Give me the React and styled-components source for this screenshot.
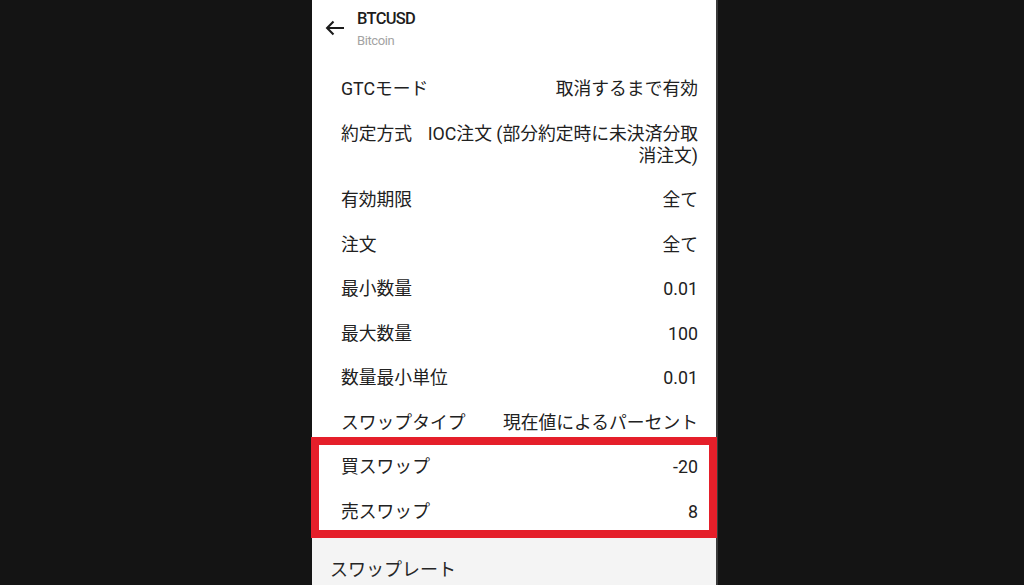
import React from 'react';
import styled, { createGlobalStyle } from 'styled-components';

const specs = [
  { label: 'GTCモード', value: '取消するまで有効' },
  { label: '約定方式', value: 'IOC注文 (部分約定時に未決済分取消注文)' },
  { label: '有効期限', value: '全て' },
  { label: '注文', value: '全て' },
  { label: '最小数量', value: '0.01' },
  { label: '最大数量', value: '100' },
  { label: '数量最小単位', value: '0.01' },
  { label: 'スワップタイプ', value: '現在値によるパーセント' },
];

const swaps = [
  { label: '買スワップ', value: '-20' },
  { label: '売スワップ', value: '8' },
];

function BackArrow() {
  return (
    <svg width="20" height="16" viewBox="0 0 20 16" fill="none">
      <path d="M19 8H2.5M8.5 1.6L2.1 8l6.4 6.4" stroke="#1b1b1b" strokeWidth="2.1" />
    </svg>
  );
}

function App() {
  return (
    <>
      <GlobalStyle />
      <Screen>
        <Phone>
          <Header>
            <BackButton>
              <BackArrow />
            </BackButton>
            <TitleBlock>
              <Symbol>BTCUSD</Symbol>
              <SymbolName>Bitcoin</SymbolName>
            </TitleBlock>
          </Header>

          <SpecList>
            {specs.map((item) => (
              <Row key={item.label}>
                <Label>{item.label}</Label>
                <Value>{item.value}</Value>
              </Row>
            ))}
            <Highlight>
              {swaps.map((item) => (
                <Row key={item.label}>
                  <Label>{item.label}</Label>
                  <Value>{item.value}</Value>
                </Row>
              ))}
            </Highlight>
          </SpecList>

          <Section>
            <SectionTitle>スワップレート</SectionTitle>
          </Section>
        </Phone>
      </Screen>
    </>
  );
}

const GlobalStyle = createGlobalStyle`
  html, body {
    margin: 0;
    padding: 0;
    background: #141414;
  }
  body {
    font-family: "Roboto", "Noto Sans CJK JP", sans-serif;
    color: #212121;
  }
`;

const Screen = styled.div`
  width: 1024px;
  height: 585px;
  overflow: hidden;
  background: #141414;
  display: flex;
`;

const Phone = styled.div`
  margin-left: 312px;
  width: 404px;
  height: 585px;
  background: #ffffff;
  box-shadow: 2px 0 0 #3a3a3a;
  display: flex;
  flex-direction: column;
`;

const Header = styled.div`
  height: 67px;
  display: flex;
  align-items: flex-start;
  box-sizing: border-box;
  padding: 9px 0 0 13px;
  column-gap: 12px;
`;

const BackButton = styled.div`
  width: 20px;
  height: 16px;
  margin-top: 11px;
  display: flex;
`;

const TitleBlock = styled.div`
  display: flex;
  flex-direction: column;
`;

const Symbol = styled.div`
  font-family: "Roboto", sans-serif;
  font-weight: 500;
  font-size: 16.5px;
  letter-spacing: -0.7px;
  line-height: 20px;
  color: #1d1d1d;
`;

const SymbolName = styled.div`
  font-family: "Roboto", sans-serif;
  font-weight: 400;
  font-size: 13px;
  letter-spacing: -0.4px;
  line-height: 16px;
  margin-top: 4px;
  color: #a3a3a3;
`;

const SpecList = styled.div`
  display: flex;
  flex-direction: column;
`;

const Row = styled.div`
  display: flex;
  justify-content: space-between;
  align-items: flex-start;
  column-gap: 12px;
  padding: 11.25px 18px 11.25px 29px;
  font-size: 17.8px;
  line-height: 22px;
`;

const Label = styled.div`
  flex-shrink: 0;
  white-space: nowrap;
`;

const Value = styled.div`
  text-align: right;
`;

const Highlight = styled.div`
  position: relative;
  display: flex;
  flex-direction: column;

  &::after {
    content: '';
    position: absolute;
    top: -8px;
    bottom: -4px;
    left: -1px;
    right: -1px;
    border: 8.5px solid #e51f2a;
    pointer-events: none;
  }
`;

const Section = styled.div`
  flex: 1;
  margin-top: 4px;
  background: #f4f4f4;
  padding: 20px 18px 0 18px;
`;

const SectionTitle = styled.div`
  font-size: 18px;
  line-height: 24px;
  color: #262626;
`;

export default App;
